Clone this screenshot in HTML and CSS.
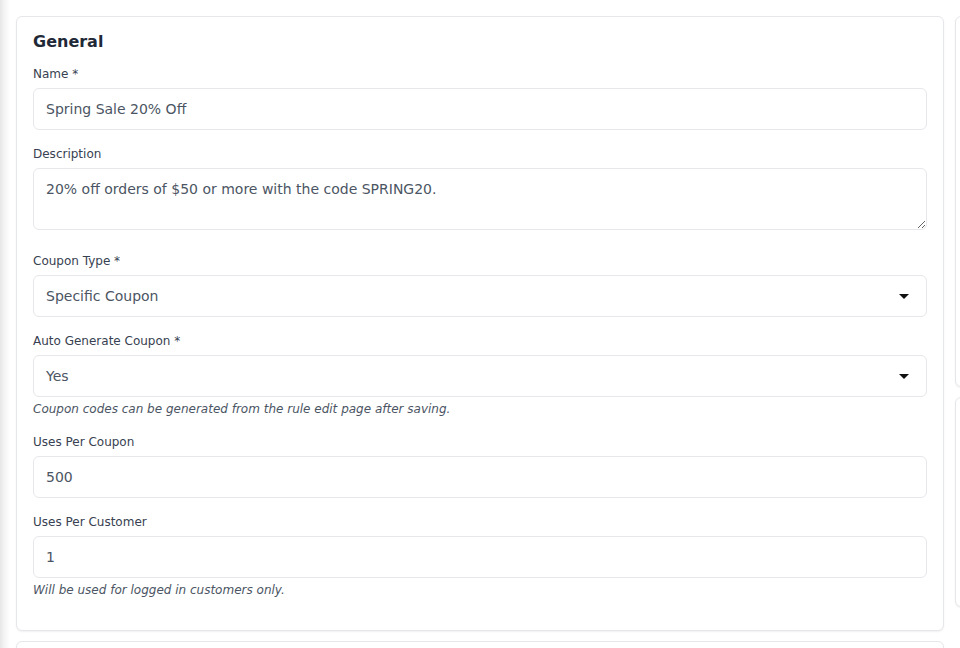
FILE: index.html
```html
<!DOCTYPE html>
<html lang="en">
<head>
<meta charset="utf-8">
<title>Edit Rule</title>
<link rel="stylesheet" href="styles.css">
</head>
<body>
<div class="page">
  <div class="layout">
    <div class="main-col">
      <section class="card">
        <h2 class="card-title">General</h2>
        <div class="field">
          <label class="label" for="name">Name *</label>
          <input class="control" id="name" type="text" value="Spring Sale 20% Off">
        </div>
        <div class="field field-area">
          <label class="label" for="desc">Description</label>
          <textarea class="control control-area" id="desc" rows="2">20% off orders of $50 or more with the code SPRING20.</textarea>
        </div>
        <div class="field">
          <label class="label" for="ctype">Coupon Type *</label>
          <div class="select-wrap">
            <select class="control control-select" id="ctype">
              <option>Specific Coupon</option>
            </select>
            <svg class="caret" width="10" height="5" viewBox="0 0 10 5"><path d="M0 0H10L5 5Z" fill="#111"/></svg>
          </div>
        </div>
        <div class="field">
          <label class="label" for="auto">Auto Generate Coupon *</label>
          <div class="select-wrap">
            <select class="control control-select" id="auto">
              <option>Yes</option>
            </select>
            <svg class="caret" width="10" height="5" viewBox="0 0 10 5"><path d="M0 0H10L5 5Z" fill="#111"/></svg>
          </div>
          <p class="help">Coupon codes can be generated from the rule edit page after saving.</p>
        </div>
        <div class="field">
          <label class="label" for="upc">Uses Per Coupon</label>
          <input class="control" id="upc" type="text" value="500">
        </div>
        <div class="field">
          <label class="label" for="upu">Uses Per Customer</label>
          <input class="control" id="upu" type="text" value="1">
          <p class="help">Will be used for logged in customers only.</p>
        </div>
      </section>
      <section class="card card-next"></section>
    </div>
    <aside class="side-col">
      <section class="card side-card side-card-a"></section>
      <section class="card side-card side-card-b"></section>
    </aside>
  </div>
</div>
</body>
</html>
```
FILE: styles.css
```css
* { box-sizing: border-box; }

html, body {
  margin: 0;
  padding: 0;
  height: 100%;
  overflow: hidden;
}

body {
  font-family: "DejaVu Sans", "Liberation Sans", sans-serif;
  color: #1f2937;
  background: #ffffff;
}

.page {
  min-height: 100%;
  padding: 16px 0 0 16px;
  background: linear-gradient(to right, #e6e6e6 0px, #f3f3f3 4px, #ffffff 10px);
}

.layout {
  display: grid;
  grid-template-columns: 928px 300px;
  column-gap: 11px;
  align-items: start;
}

.card {
  background: #ffffff;
  border: 1px solid #e5e7eb;
  border-radius: 6px;
  box-shadow: 0 1px 2px rgba(0, 0, 0, 0.06);
  padding: 16px 16px 17px;
}

.card-next {
  margin-top: 10px;
  height: 120px;
}

.card-title {
  margin: 0 0 14px;
  font-size: 16px;
  line-height: 17px;
  font-weight: 700;
  color: #1f2937;
}

.field {
  margin-bottom: 14px;
}

.field-area {
  margin-bottom: 21px;
}

.label {
  display: block;
  font-size: 12px;
  line-height: 20px;
  margin-bottom: 4px;
  color: #374151;
}

.control {
  display: block;
  width: 100%;
  height: 42px;
  margin: 0;
  padding: 10px 12px;
  font-family: "DejaVu Sans", "Liberation Sans", sans-serif;
  font-size: 14px;
  line-height: 20px;
  color: #4b5563;
  background: #ffffff;
  border: 1px solid #e5e7eb;
  border-radius: 6px;
  outline: none;
}

.control-area {
  height: 62px;
  resize: vertical;
}

.select-wrap {
  position: relative;
}

.control-select {
  -webkit-appearance: none;
  appearance: none;
  padding-top: 0;
  padding-bottom: 0;
}

.caret {
  position: absolute;
  right: 18px;
  top: 19px;
  display: block;
  pointer-events: none;
}

.help {
  margin: 3px 0 0;
  font-size: 12px;
  line-height: 18px;
  font-style: italic;
  color: #4b5563;
}

.side-card {
  padding: 0;
}

.side-card-a {
  height: 371px;
}

.side-card-b {
  margin-top: 10px;
  height: 210px;
}
```
